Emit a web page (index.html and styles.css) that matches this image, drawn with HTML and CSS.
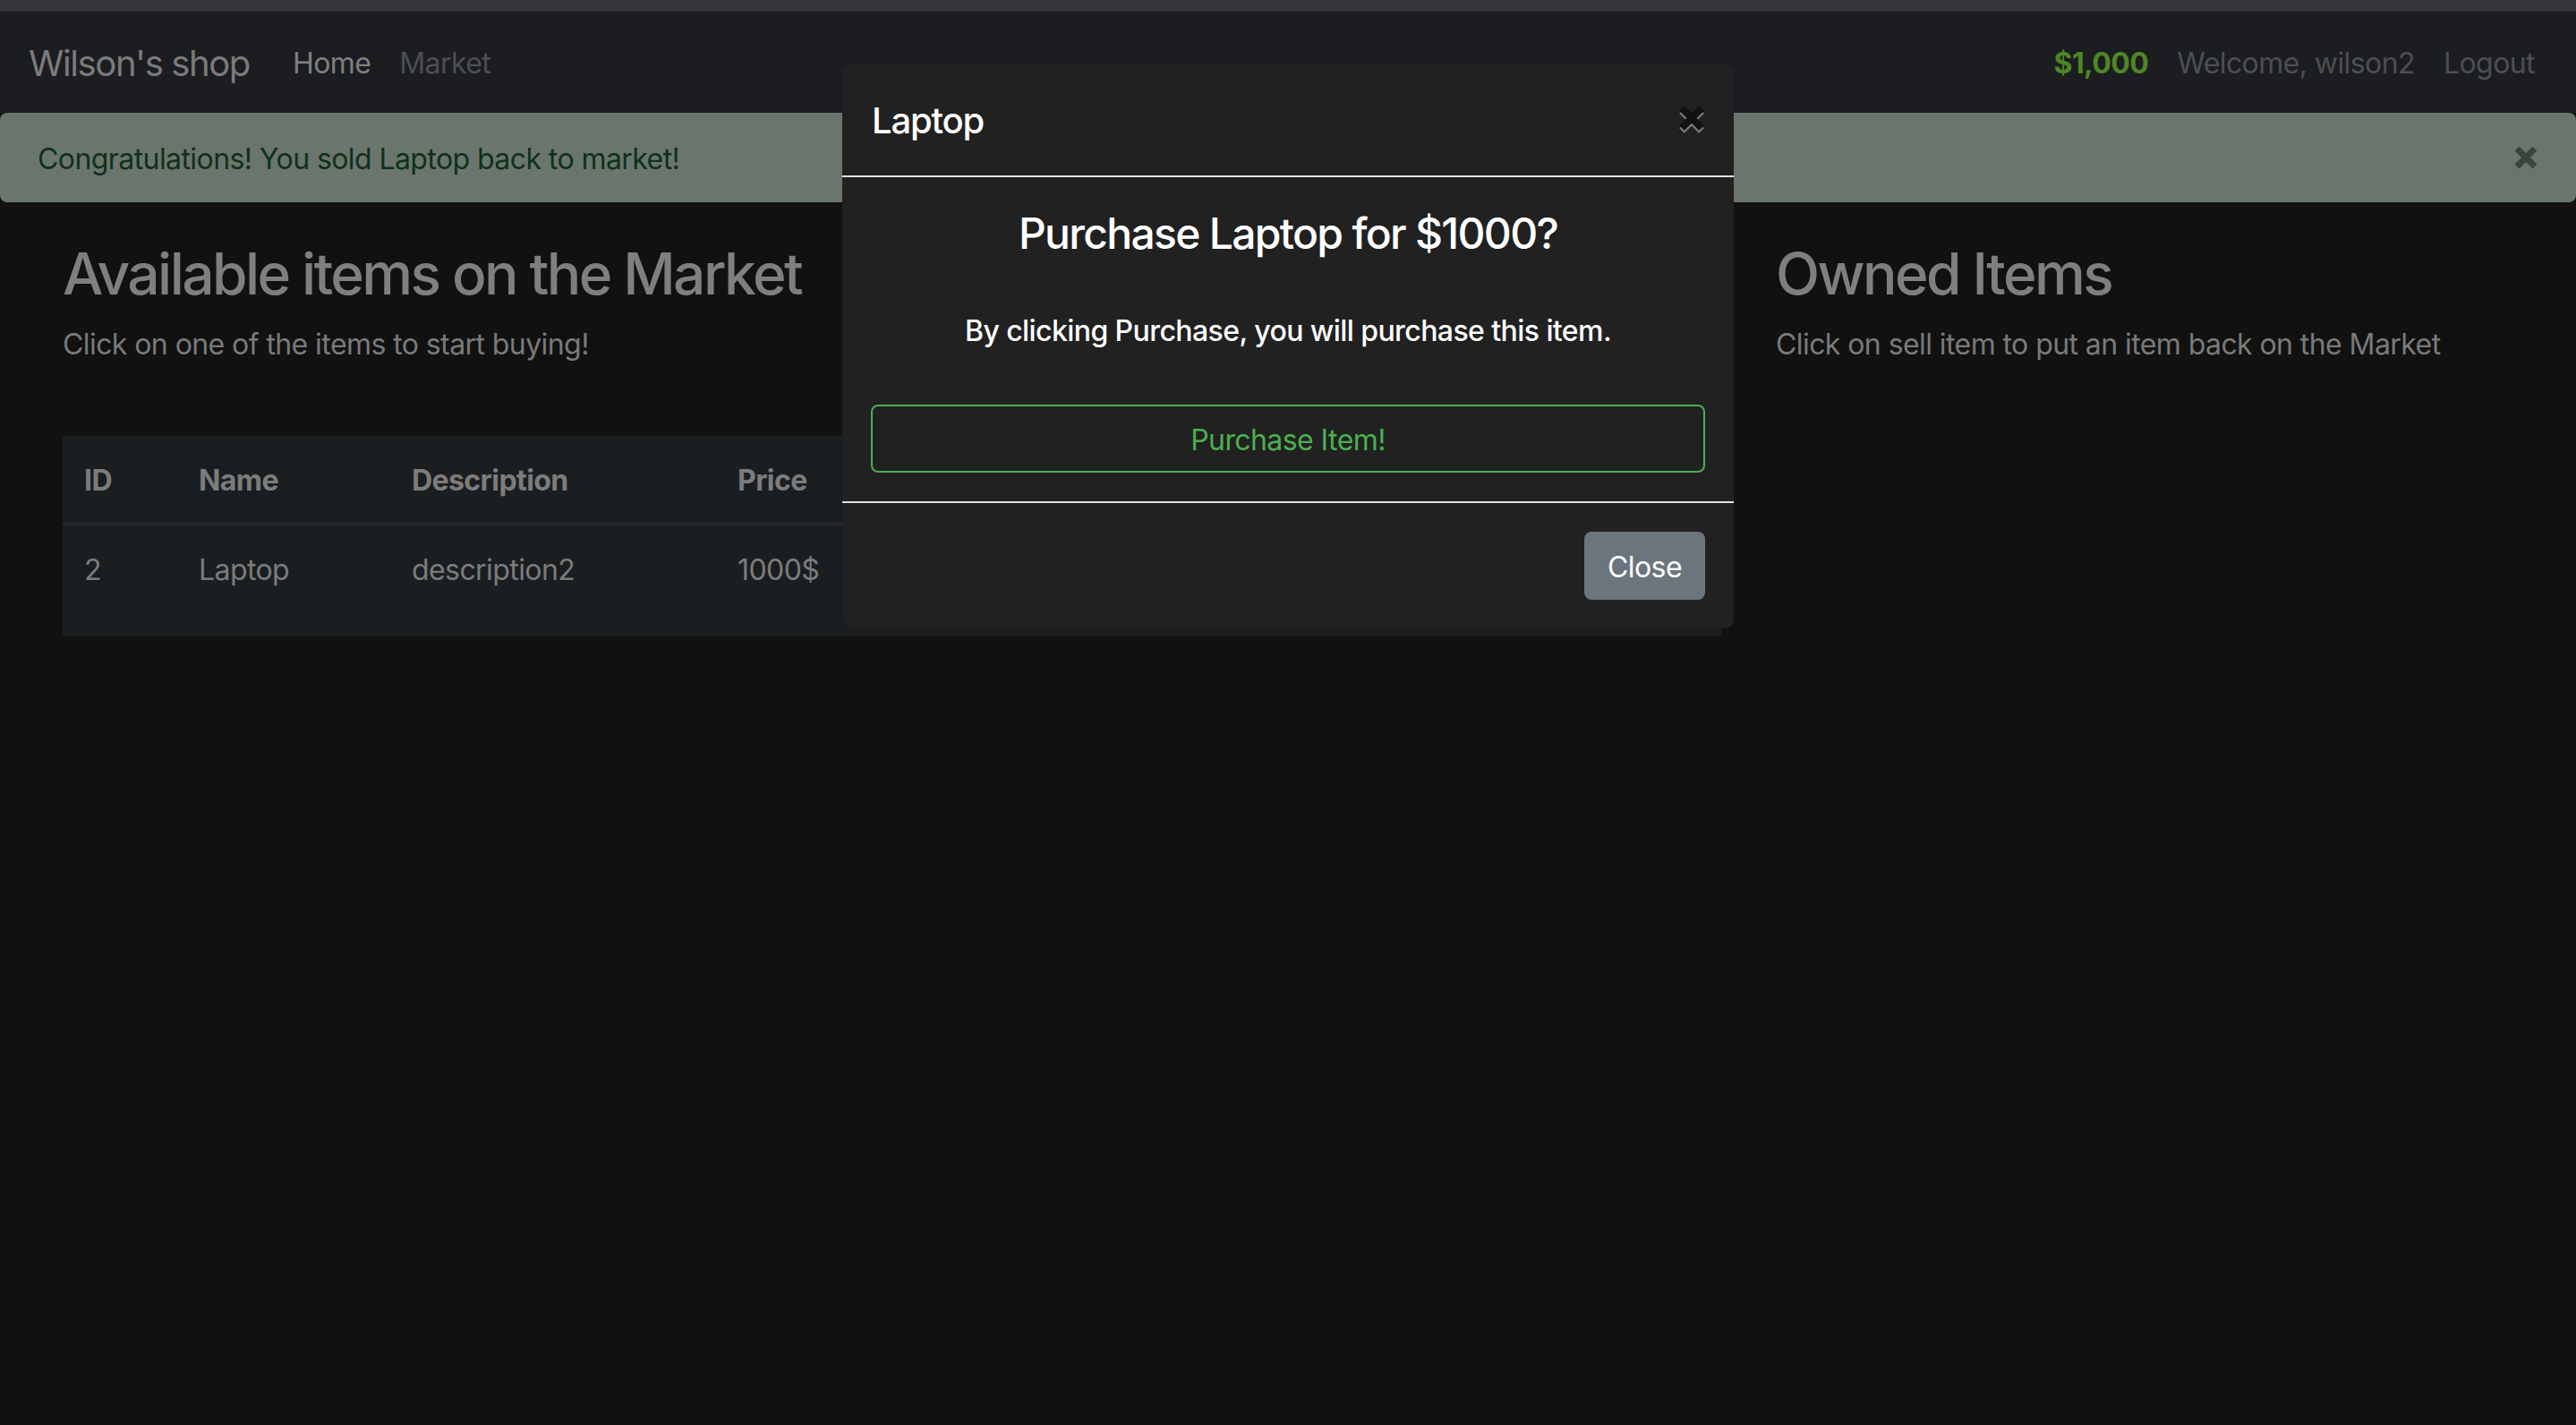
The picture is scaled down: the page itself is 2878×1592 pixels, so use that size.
FILE: index.html
```html
<!DOCTYPE html>
<html lang="en">
<head>
<meta charset="utf-8">
<title>Wilson's shop - Market</title>
<link rel="stylesheet" href="styles.css">
</head>
<body>
<div class="chrome"></div>
<nav class="navbar">
  <a class="brand" href="#">Wilson's shop</a>
  <ul class="nav">
    <li><a class="nav-link active" href="#">Home</a></li>
    <li><a class="nav-link" href="#">Market</a></li>
  </ul>
  <ul class="nav nav-right">
    <li><span class="nav-link budget">$1,000</span></li>
    <li><span class="nav-link">Welcome, wilson2</span></li>
    <li><a class="nav-link" href="#">Logout</a></li>
  </ul>
</nav>

<div class="alert">
  <span>Congratulations! You sold Laptop back to market!</span>
  <button class="alert-close" aria-label="Close">
    <svg width="26" height="26" viewBox="0 0 26 26"><path d="M3 3 L23 23 M23 3 L3 23" stroke="#3b443d" stroke-width="7"/></svg>
  </button>
</div>

<main class="content">
  <section class="market">
    <h2>Available items on the Market</h2>
    <p class="lead">Click on one of the items to start buying!</p>
    <table class="table">
      <thead>
        <tr>
          <th class="c-id">ID</th>
          <th class="c-name">Name</th>
          <th class="c-desc">Description</th>
          <th class="c-price">Price</th>
          <th>Options</th>
        </tr>
      </thead>
      <tbody>
        <tr>
          <td>2</td>
          <td>Laptop</td>
          <td>description2</td>
          <td>1000$</td>
          <td><button class="btn btn-info">More Info</button> <button class="btn btn-buy">Purchase this Item</button></td>
        </tr>
      </tbody>
    </table>
  </section>
  <section class="owned">
    <h2>Owned Items</h2>
    <p class="lead">Click on sell item to put an item back on the Market</p>
  </section>
</main>

<div class="modal" role="dialog">
  <div class="modal-header">
    <h5 class="modal-title">Laptop</h5>
    <button class="modal-close" aria-label="Close">
      <svg width="32" height="32" viewBox="0 0 32 32">
        <path d="M5 7 L27 29 M27 7 L5 29" stroke="#7a7a7a" stroke-width="8"/>
        <path d="M5 4 L27 26 M27 4 L5 26" stroke="#111111" stroke-width="8"/>
      </svg>
    </button>
  </div>
  <div class="modal-body">
    <h4 class="question">Purchase Laptop for $1000?</h4>
    <h6 class="note">By clicking Purchase, you will purchase this item.</h6>
    <button class="btn btn-outline-success">Purchase Item!</button>
  </div>
  <div class="modal-footer">
    <button class="btn btn-secondary">Close</button>
  </div>
</div>
</body>
</html>
```
FILE: styles.css
```css
* { box-sizing: border-box; }
html, body { margin: 0; padding: 0; }
body {
  background: #111111;
  font-family: "Inter", "Noto Sans", sans-serif;
  font-size: 32px;
  line-height: 1.5;
  letter-spacing: -0.018em;
  color: #808080;
  width: 2878px;
  height: 1592px;
  position: relative;
  overflow: hidden;
}
.chrome {
  height: 13px;
  background: #35363a;
  border-bottom: 1px solid #2a2b2e;
}
.navbar {
  height: 113px;
  background: #1b1d20;
  display: flex;
  align-items: center;
  padding: 3px 30px 0 32px;
}
.brand {
  font-size: 40px;
  letter-spacing: -0.035em;
  color: #7b7b7b;
  text-decoration: none;
  margin-right: 32px;
}
.nav {
  list-style: none;
  margin: 0;
  padding: 0;
  display: flex;
}
.nav-right { margin-left: auto; }
.nav-link {
  display: block;
  padding: 0 16px;
  color: #4d4f50;
  text-decoration: none;
}
.nav-link.active { color: #808080; }
.budget { color: #4f8526; font-weight: 700; }

.alert {
  height: 100px;
  background: #6a766d;
  border-radius: 8px;
  display: flex;
  align-items: center;
  justify-content: space-between;
  padding: 3px 40px 0 42px;
  color: #10301a;
}
.alert-close {
  background: none;
  border: 0;
  padding: 0;
  display: flex;
  margin: 0 3px 3px 0;
}

.content {
  display: grid;
  grid-template-columns: 1854px 1fr;
  column-gap: 60px;
  padding: 42px 0 0 70px;
}
h2 {
  font-size: 64px;
  font-weight: 500;
  line-height: 1.2;
  letter-spacing: -0.04em;
  color: #7f7f7f;
  margin: 0 0 16px;
}
.lead { margin: 0 0 78px; color: #7a7a7a; }

.table {
  width: 100%;
  border-collapse: collapse;
  background: #1b1e21;
  color: #7c7c7c;
}
.table th, .table td {
  text-align: left;
  padding: 26px 24px 22px;
  vertical-align: top;
  white-space: nowrap;
}
.table th {
  font-weight: 700;
  border-bottom: 4px solid #24282c;
}
.table td { height: 126px; }
.c-id { width: 128px; }
.c-name { width: 238px; }
.c-desc { width: 364px; }
.c-price { width: 160px; }

.btn {
  font-family: inherit;
  font-size: 32px;
  letter-spacing: -0.018em;
  line-height: 48px;
  padding: 14px 24px 10px;
  border: 2px solid transparent;
  border-radius: 8px;
  background: none;
}
.table .btn { margin-top: -14px; }
.btn-info { border-color: #0c4f5a; color: #0c4f5a; }
.btn-buy { border-color: #14532a; color: #14532a; }

.modal {
  position: absolute;
  top: 72px;
  left: calc(50% - 498px);
  width: 996px;
  background: #212121;
  border-radius: 10px;
  color: #ffffff;
}
.modal-header {
  display: flex;
  align-items: center;
  justify-content: space-between;
  padding: 33px 32px 31px 33px;
  border-bottom: 2px solid #dee2e6;
}
.modal-title {
  margin: 0;
  font-size: 40px;
  font-weight: 500;
  letter-spacing: -0.03em;
  line-height: 60px;
}
.modal-close {
  background: none;
  border: 0;
  padding: 0;
  display: flex;
  margin: -5px -1px 0 0;
}
.modal-body {
  padding: 34px 32px 32px;
  text-align: center;
}
.question {
  margin: 0 0 61px;
  font-size: 48px;
  font-weight: 500;
  letter-spacing: -0.035em;
  line-height: 1.2;
}
.note {
  margin: 0 0 63px;
  font-size: 32px;
  font-weight: 500;
  line-height: 1.2;
}
.btn-outline-success {
  display: block;
  width: 100%;
  border-color: #4caf50;
  color: #4caf50;
}
.modal-footer {
  display: flex;
  justify-content: flex-end;
  padding: 24px;
  border-top: 2px solid #dee2e6;
}
.btn-secondary {
  margin: 8px;
  background: #6c757d;
  color: #ffffff;
}
```
